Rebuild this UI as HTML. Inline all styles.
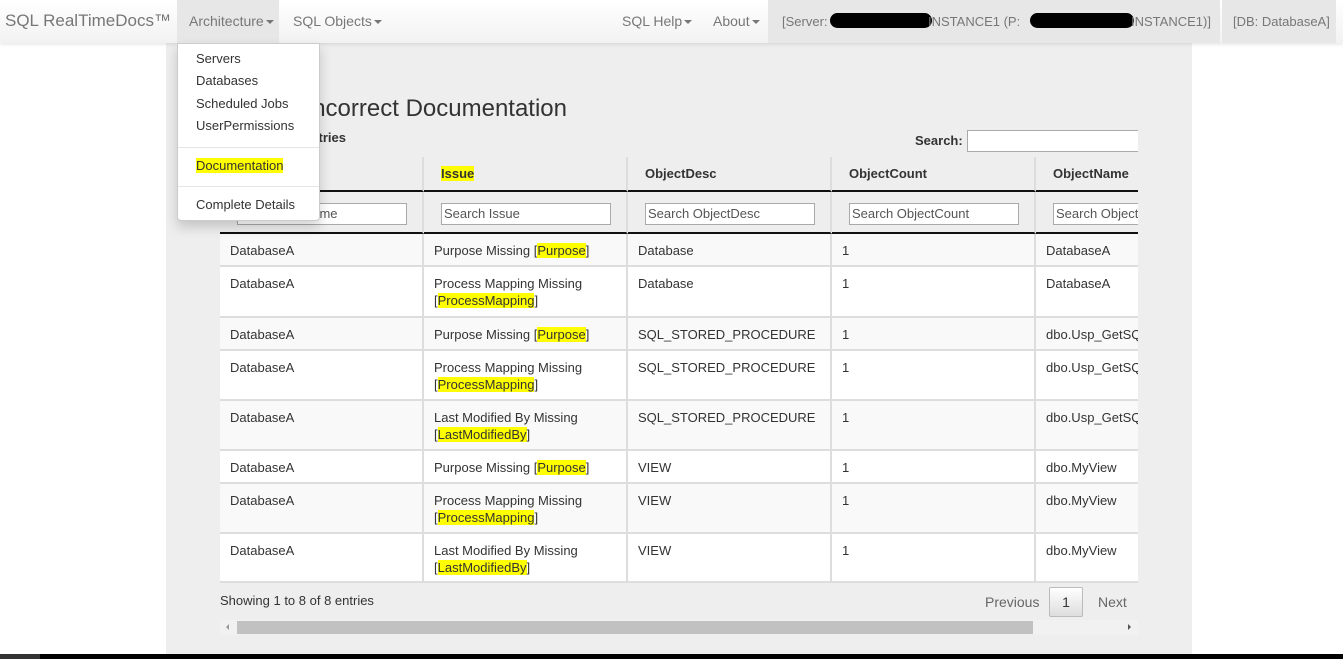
<!DOCTYPE html>
<html><head><meta charset="utf-8"><style>
*{box-sizing:border-box;margin:0;padding:0}
body{width:1343px;height:659px;overflow:hidden;background:#fff;font-family:"Liberation Sans",Arial,sans-serif;font-size:13px;color:#333;position:relative}
.abs{position:absolute}
.nav{left:0;top:0;width:1343px;height:43px;background:linear-gradient(#fff,#f2f2f2);box-shadow:0 1px 4px rgba(0,0,0,.12);z-index:5}
.nav span{position:absolute;top:13px;color:#777;font-size:14px;white-space:nowrap}
.caret{display:inline-block;width:0;height:0;border-left:4px solid transparent;border-right:4px solid transparent;border-top:4px solid #777;vertical-align:middle;margin-left:2px}
.main{left:166px;top:43px;width:1026px;height:611px;background:#eee}
.dd{left:177px;top:43px;width:143px;height:178px;background:#fff;border:1px solid #ccc;border-radius:0 0 4px 4px;box-shadow:0 6px 12px rgba(0,0,0,.18);z-index:6}
.dd div{position:absolute;left:18px;top:0;font-size:13px;color:#333}
.dd hr{position:absolute;left:0;width:141px;border:0;border-top:1px solid #e5e5e5}
.hl{background:#ff0}
.cell{position:absolute;padding:9px 10px;line-height:17px;border-right:2px solid #ddd;border-bottom:2px solid #ddd}
.inp{position:absolute;height:22px;background:#fff;border:1px solid #aaa;font-size:13px;color:#555;padding:2px 2px;line-height:16px;overflow:hidden;white-space:nowrap}
.blob{position:absolute;top:13px;height:15px;background:#000;border-radius:8px}
</style></head><body>
<div class="abs nav">
<span style="left:5px;top:11px;font-size:17px;color:#777">SQL RealTimeDocs™</span>
<div class="abs" style="left:177px;top:0;width:102px;height:43px;background:#e7e7e7"></div>
<span style="left:189px">Architecture<i class="caret"></i></span>
<span style="left:293px">SQL Objects<i class="caret"></i></span>
<span style="left:622px">SQL Help<i class="caret"></i></span>
<span style="left:713px">About<i class="caret"></i></span>
<div class="abs" style="left:768px;top:0;width:452px;height:43px;background:#e7e7e7"></div>
<div class="abs" style="left:1222px;top:0;width:114px;height:43px;background:#e7e7e7"></div>
<span style="left:782px;font-size:13px;top:14px">[Server:</span>
<div class="blob" style="left:830px;width:102px"></div>
<span style="left:928px;font-size:13px;top:14px">INSTANCE1 (P:</span>
<div class="blob" style="left:1030px;width:104px"></div>
<span style="left:1131px;font-size:13px;top:14px">INSTANCE1)]</span>
<span style="left:1233px;font-size:13px;top:14px">[DB: DatabaseA]</span>
</div>
<div class="abs main"></div>
<div class="abs" style="left:220px;top:92px;width:347px;height:34px;overflow:hidden;direction:rtl"><span style="direction:ltr;unicode-bidi:embed;font-size:24px;color:#333;white-space:nowrap;display:inline-block;line-height:34px">Missing/Incomplete/Incorrect Documentation</span></div>
<div class="abs" style="right:997px;top:130px;font-weight:bold;white-space:nowrap">Show 10 entries</div>
<div class="abs" style="left:915px;top:133px;font-weight:bold">Search:</div>
<div class="abs" style="left:967px;top:130px;width:171px;height:22px;background:#fff;border:1px solid #aaa;border-right:0"></div>
<div class="abs" style="left:220px;top:157px;width:918px;height:426px;overflow:hidden;background:#eee">
<div id="t"></div>
</div>
<div class="abs" style="left:220px;top:593px">Showing 1 to 8 of 8 entries</div>
<div class="abs" style="left:985px;top:594px;color:#666;font-size:14px">Previous</div>
<div class="abs" style="left:1049px;top:587px;width:34px;height:30px;border:1px solid #bbb;border-radius:2px;background:linear-gradient(#fff,#ddd);text-align:center;line-height:28px;font-size:14px">1</div>
<div class="abs" style="left:1098px;top:594px;color:#666;font-size:14px">Next</div>
<div class="abs" style="left:220px;top:620px;width:918px;height:15px;background:#f1f1f1"></div>
<div class="abs" style="left:237px;top:621px;width:796px;height:13px;background:#c1c1c1"></div>
<div class="abs" style="left:226px;top:624px;border-top:3px solid transparent;border-bottom:3px solid transparent;border-right:3px solid #999"></div>
<div class="abs" style="left:1128px;top:624px;border-top:3px solid transparent;border-bottom:3px solid transparent;border-left:3px solid #555"></div>
<div class="abs" style="left:0;top:654px;width:1343px;height:5px;background:#000"></div>
<div class="abs" style="left:0;top:654px;width:40px;height:5px;background:#333"></div>
<div class="abs dd">
<div style="top:7px">Servers</div>
<div style="top:29px">Databases</div>
<div style="top:52px">Scheduled Jobs</div>
<div style="top:74px">UserPermissions</div>
<hr style="top:103px">
<div style="top:114px"><span class="hl">Documentation</span></div>
<hr style="top:142px">
<div style="top:153px">Complete Details</div>
</div>
<script>
var cols=[0,204,408,612,816,1020];
var heads=["DB","<span class='hl'>Issue</span>","ObjectDesc","ObjectCount","ObjectName"];
var ph=["Search DBName","Search Issue","Search ObjectDesc","Search ObjectCount","Search ObjectName"];
var P="Purpose Missing [<span class='hl'>Purpose</span>]",M="Process Mapping Missing<br>[<span class='hl'>ProcessMapping</span>]",L="Last Modified By Missing<br>[<span class='hl'>LastModifiedBy</span>]";
var rows=[[77,33,P,"Database","DatabaseA"],[110,51,M,"Database","DatabaseA"],[161,33,P,"SQL_STORED_PROCEDURE","dbo.Usp_GetSQ"],[194,50,M,"SQL_STORED_PROCEDURE","dbo.Usp_GetSQ"],[244,50,L,"SQL_STORED_PROCEDURE","dbo.Usp_GetSQ"],[294,33,P,"VIEW","dbo.MyView"],[327,50,M,"VIEW","dbo.MyView"],[377,49,L,"VIEW","dbo.MyView"]];
var h="";
for(var i=0;i<5;i++){
h+='<div class="cell" style="left:'+cols[i]+'px;top:0;width:204px;height:35px;font-weight:bold;padding:8px 17px;border-bottom:2px solid #111">'+heads[i]+'</div>';
h+='<div class="cell" style="left:'+cols[i]+'px;top:35px;width:204px;height:42px;border-bottom:2px solid #111"></div>';
h+='<div class="inp" style="left:'+(cols[i]+17)+'px;top:46px;width:170px">'+ph[i]+'</div>';
}
rows.forEach(function(r,k){
var bg=k%2==0?"#f9f9f9":"#fff";var v=["DatabaseA",r[2],r[3],"1",r[4]];
for(var i=0;i<5;i++)h+='<div class="cell" style="background:'+bg+';left:'+cols[i]+'px;top:'+r[0]+'px;width:204px;height:'+r[1]+'px;white-space:nowrap;overflow:hidden;padding-top:8px">'+v[i]+'</div>';
});
document.getElementById("t").innerHTML=h;
</script>
</body></html>
